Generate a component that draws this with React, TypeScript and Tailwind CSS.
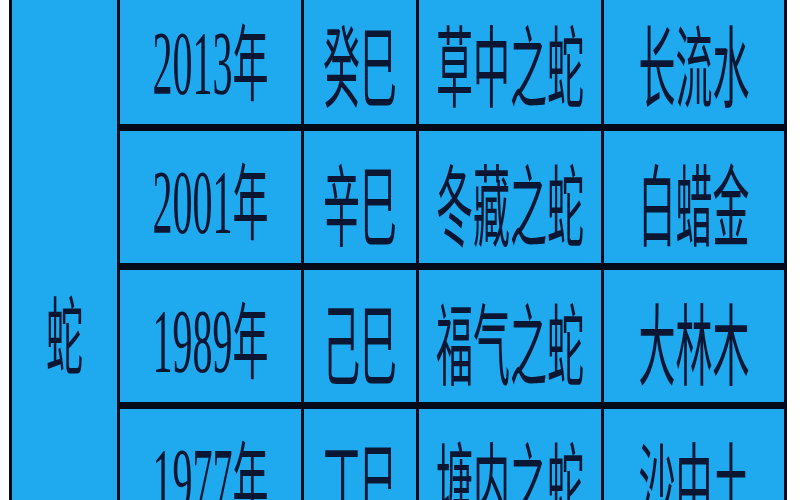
const rows = [
  { year: "2013", ganzhi: "癸巳", name: "草中之蛇", wuxing: "长流水" },
  { year: "2001", ganzhi: "辛巳", name: "冬藏之蛇", wuxing: "白蜡金" },
  { year: "1989", ganzhi: "己巳", name: "福气之蛇", wuxing: "大林木" },
  { year: "1977", ganzhi: "丁巳", name: "塘内之蛇", wuxing: "沙中土" },
];

function Cell({ children }: { children: React.ReactNode }) {
  return (
    <div className="flex items-center justify-center bg-[#1fa9ee] pt-[8px]">
      <span className="inline-block scale-y-[2.4] font-['Noto_Sans_CJK_SC',sans-serif] text-[37px] font-normal leading-none text-[#0b1633]">
        {children}
      </span>
    </div>
  );
}

function YearCell({ year }: { year: string }) {
  return (
    <div className="flex items-center justify-center bg-[#1fa9ee] pt-[8px]">
      <span className="inline-block scale-y-[2.3] font-['Liberation_Serif',serif] text-[40px] leading-none text-[#0b1633]">
        {year}
        <span className="font-['Noto_Sans_CJK_SC',sans-serif] text-[36px] font-normal">年</span>
      </span>
    </div>
  );
}

export default function App() {
  return (
    <div className="h-[500px] w-[800px] overflow-hidden bg-white">
      {/* table, top row border sits above the crop */}
      <div className="ml-[9px] mt-[-8px] grid w-[778px] grid-cols-[105px_181px_112px_182px_180px] grid-rows-[132px_132px_132px_132px] gap-x-[3px] gap-y-[7px] bg-[#050a18] px-[3px]">
        <div className="row-span-4 flex flex-col items-center bg-[#1fa9ee] pt-[322px]">
          <span className="inline-block scale-y-[2.3] font-['Noto_Sans_CJK_SC',sans-serif] text-[37px] font-normal leading-none text-[#0b1633]">
            蛇
          </span>
        </div>
        {rows.map((r) => (
          <>
            <YearCell key={r.year + "y"} year={r.year} />
            <Cell key={r.year + "g"}>{r.ganzhi}</Cell>
            <Cell key={r.year + "n"}>{r.name}</Cell>
            <Cell key={r.year + "w"}>{r.wuxing}</Cell>
          </>
        ))}
      </div>
    </div>
  );
}
